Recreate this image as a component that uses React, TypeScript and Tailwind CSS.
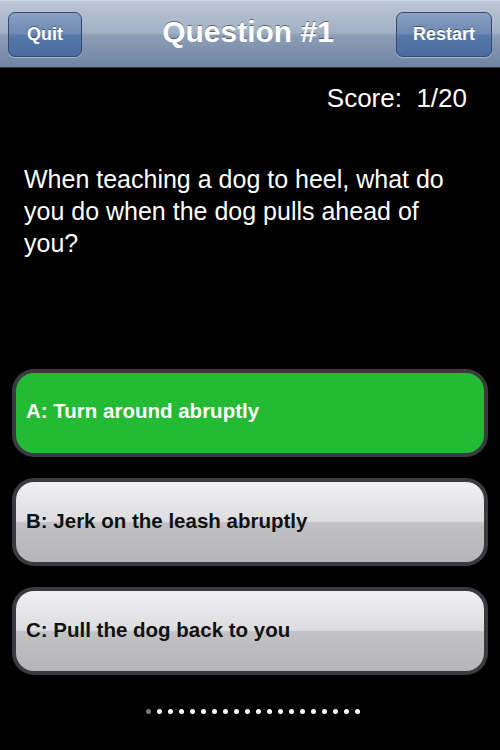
import React from "react";

function NavButton({ label, className }: { label: string; className: string }) {
  return (
    <button
      className={`h-[45px] rounded-[7px] border border-[#34496b] bg-[linear-gradient(180deg,#8aa0c2_0%,#6e88b2_48%,#5677a8_52%,#4a6ca0_100%)] shadow-[0_1px_0_rgba(255,255,255,0.35)] text-white font-bold text-[18px] [text-shadow:0_-1px_0_rgba(0,0,0,0.45)] ${className}`}
    >
      {label}
    </button>
  );
}

function Answer({ label, green }: { label: string; green?: boolean }) {
  return (
    <div className="mx-[12px] h-[88px] rounded-[22px] bg-[#3a3b40] p-[4px]">
      <div
        className={
          green
            ? "h-full rounded-[18px] bg-[#22bb33] flex items-center pl-[10px] pb-[4px] text-white font-bold text-[20.5px]"
            : "h-full rounded-[18px] bg-[linear-gradient(180deg,#f0f0f2_0%,#dddde0_49%,#c2c2c5_51%,#b6b6b9_100%)] flex items-center pl-[10px] pb-[2px] text-[#111] font-bold text-[20.5px]"
        }
      >
        {label}
      </div>
    </div>
  );
}

export default function App() {
  const dots = Array.from({ length: 20 }, (_, i) => i);
  return (
    <div className="w-full h-[750px] bg-black overflow-hidden font-['Liberation_Sans',Arial,sans-serif]">
      <div className="h-[68px] grid grid-cols-[1fr_auto_1fr] items-center px-[8px] border-t border-[#d3dae4] border-b border-b-[#2b3649] bg-[linear-gradient(180deg,#bcc6d5_0%,#a2b0c5_48%,#8d9eb7_52%,#6e84a2_100%)]">
        <NavButton label="Quit" className="w-[74px] justify-self-start" />
        <div className="mb-[5px] pr-[4px] text-white font-bold text-[30px] [text-shadow:0_-1px_0_rgba(0,0,0,0.45)]">Question #1</div>
        <NavButton label="Restart" className="w-[96px] justify-self-end" />
      </div>
      <div className="mt-[15px] pr-[33px] text-right text-white text-[26px] leading-[30px] whitespace-pre">
        {"Score:  1/20"}
      </div>
      <div className="mt-[50px] pl-[24px] pr-[30px] text-white text-[25px] leading-[32px]">
        When teaching a dog to heel, what do you do when the dog pulls ahead of you?
      </div>
      <div className="mt-[110px] flex flex-col gap-[21px]">
        <Answer label="A: Turn around abruptly" green />
        <Answer label="B: Jerk on the leash abruptly" />
        <Answer label="C: Pull the dog back to you" />
      </div>
      <div className="mt-[34px] flex justify-center gap-[6px] pl-[6px]">
        {dots.map((i) => (
          <div
            key={i}
            className={i === 0 ? "w-[5px] h-[5px] rounded-full bg-[#7a7a7a]" : "w-[5px] h-[5px] rounded-full bg-white"}
          />
        ))}
      </div>
    </div>
  );
}
